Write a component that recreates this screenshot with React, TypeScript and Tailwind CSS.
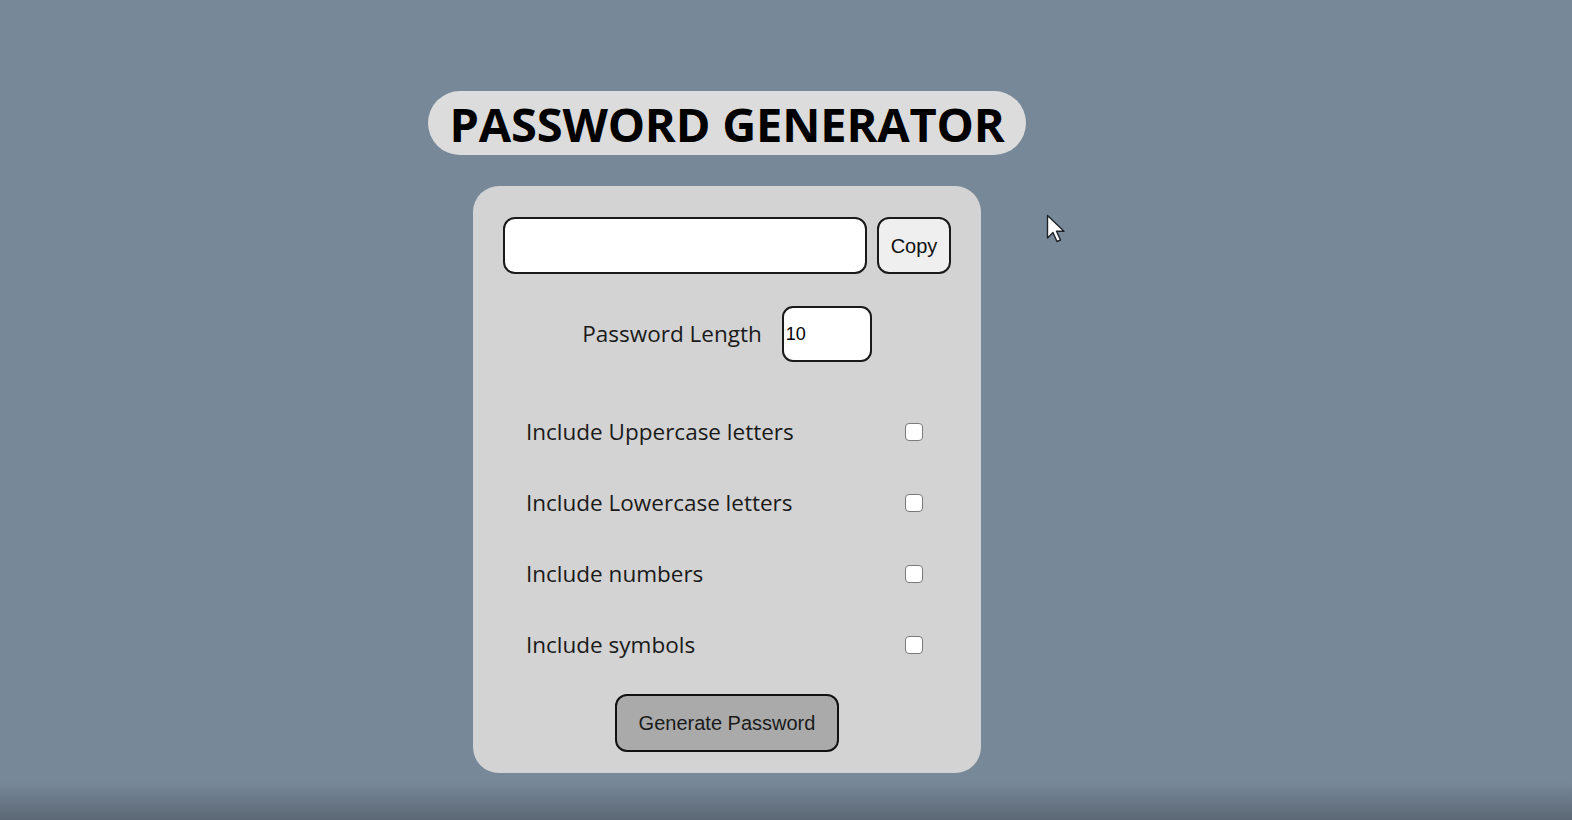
import { useState } from 'react';

const options = [
  'Include Uppercase letters',
  'Include Lowercase letters',
  'Include numbers',
  'Include symbols',
];

function Cursor() {
  return (
    <svg className="absolute left-[1046px] top-[214px]" width="22" height="30" viewBox="0 0 22 30">
      <path
        d="M1.5 1.5 L1.5 24 L7 18.5 L11 27.5 L14.5 26 L10.5 17.2 L18 17.2 Z"
        fill="#ffffff"
        stroke="#1f2328"
        strokeWidth="1.4"
        strokeLinejoin="round"
      />
    </svg>
  );
}

export default function App() {
  const [password, setPassword] = useState('');
  const [length, setLength] = useState('10');

  return (
    <div className="relative h-screen overflow-hidden bg-[linear-gradient(to_bottom,#778899_782px,#5c6875_820px)] font-['Open_Sans',sans-serif]">
      <div className="flex w-[1454px] flex-col items-center pt-[91px]">
        <h1 className="flex h-[64px] w-[598px] items-center justify-center rounded-full bg-[#dcdcdc] pt-[2px] text-[47px] font-bold tracking-[-0.2px] text-black">
          PASSWORD GENERATOR
        </h1>

        <div className="mt-[31px] flex w-[508px] flex-col rounded-[26px] bg-[#d3d3d3] px-[30px] pt-[31px] pb-[21px]">
          <div className="flex h-[57px] gap-[10px]">
            <input
              type="text"
              value={password}
              onChange={(e) => setPassword(e.target.value)}
              className="h-full w-[364px] rounded-[12px] border-2 border-[#1a1a1a] bg-white px-3 outline-none"
            />
            <button className="h-full w-[74px] rounded-[12px] border-2 border-[#1a1a1a] bg-[#efefef] font-['Liberation_Sans',sans-serif] text-[20px] text-[#111]">
              Copy
            </button>
          </div>

          <div className="mt-[32px] flex h-[56px] items-center justify-center gap-[20px]">
            <label className="text-[22.5px] text-[#1a1a1a]">Password Length</label>
            <input
              type="number"
              value={length}
              onChange={(e) => setLength(e.target.value)}
              className="h-full w-[90px] rounded-[11px] border-2 border-[#1a1a1a] bg-white pl-[2px] font-['Liberation_Sans',sans-serif] text-[18px] text-black outline-none"
            />
          </div>

          <div className="mt-[34px] flex flex-col">
            {options.map((opt) => (
              <div key={opt} className="flex h-[71px] items-center justify-between pr-[28px] pl-[23px]">
                <span className="text-[22.5px] text-[#1a1a1a]">{opt}</span>
                <input
                  type="checkbox"
                  className="h-[18px] w-[18px] appearance-none rounded-[4px] border-[1.5px] border-[#7a7a7a] bg-white"
                />
              </div>
            ))}
          </div>

          <div className="mt-[14px] flex justify-center">
            <button className="h-[58px] w-[224px] rounded-[12px] border-2 border-[#111] bg-[#aaaaaa] font-['Liberation_Sans',sans-serif] text-[20px] text-[#1a1a1a]">
              Generate Password
            </button>
          </div>
        </div>
      </div>
      <Cursor />
    </div>
  );
}
